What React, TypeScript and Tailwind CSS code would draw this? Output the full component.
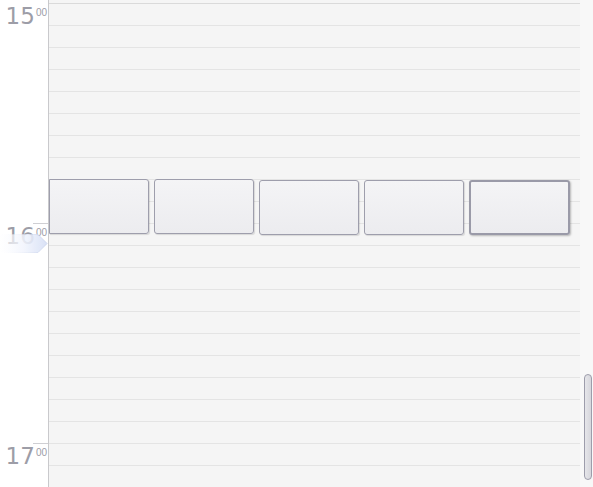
import React from 'react';

const hours = ['15', '16', '17'];
const rows = Array.from({ length: 22 });

const HourLabel: React.FC<{ hour: string; tick: boolean }> = ({ hour, tick }) => (
  <div className="h-[220px] shrink-0 flex flex-col">
    <div className={`h-px w-[15px] ml-auto ${tick ? 'bg-[#cfcfd3]' : 'bg-transparent'}`} />
    <div className="flex justify-end items-start pr-[1px] mt-[1px] text-[#9d9da7]">
      <span className="text-[23px] leading-[23px]">{hour}</span>
      <span className="text-[10px] leading-none mt-[3px] ml-[1px]" style={{ fontFamily: '"Liberation Sans", sans-serif' }}>00</span>
    </div>
  </div>
);

const Card: React.FC<{ selected?: boolean; className?: string }> = ({ selected, className }) => (
  <div
    className={`h-[55px] rounded-[3px] bg-gradient-to-b from-[#f4f4f6] to-[#ececef] ${
      selected
        ? 'w-[101px] border-2 border-[#9a9aa8] shadow-[1px_1px_2px_rgba(0,0,0,0.25)]'
        : 'w-[100px] border border-[#9e9eac] shadow-[1px_1px_1px_rgba(0,0,0,0.12)]'
    } ${className ?? ''}`}
  />
);

export default function App() {
  return (
    <div className="h-[487px] w-[593px] overflow-hidden flex bg-white" style={{ fontFamily: '"DejaVu Sans", sans-serif' }}>
      {/* time gutter */}
      <div className="relative w-[49px] shrink-0 border-r border-[#c9c9cc] pt-[3px] bg-white">
        {hours.map((h, i) => (
          <HourLabel key={h} hour={h} tick={i > 0} />
        ))}
        {/* current time marker */}
        <svg className="absolute left-0 top-[234px] opacity-90" width="48" height="20" viewBox="0 0 48 20">
          <defs>
            <linearGradient id="mk" x1="0" x2="1" y1="0" y2="0">
              <stop offset="0" stopColor="#ffffff" stopOpacity="0.6" />
              <stop offset="0.5" stopColor="#f2f5fd" stopOpacity="0.95" />
              <stop offset="1" stopColor="#d6dff6" />
            </linearGradient>
            <linearGradient id="mks" x1="0" x2="1" y1="0" y2="0">
              <stop offset="0" stopColor="#ffffff" stopOpacity="0" />
              <stop offset="1" stopColor="#c4cfec" />
            </linearGradient>
          </defs>
          <path d="M0 0.5 H38 L47 9.5 L38 18.5 H0 Z" fill="url(#mk)" stroke="url(#mks)" strokeWidth="1" />
        </svg>
      </div>

      {/* day grid */}
      <div className="relative w-[531px] shrink-0 bg-[#f5f5f5] pt-[3px]">
        {rows.map((_, i) => (
          <div key={i} className={`h-[22px] border-t ${i === 0 ? 'border-[#dadada]' : 'border-[#e4e4e4]'}`} />
        ))}
        <div className="absolute left-0 top-[179px] flex items-start gap-[5px]">
          <Card className="rounded-l-none" />
          <Card />
          <Card className="mt-px" />
          <Card className="mt-px" />
          <Card selected className="mt-px h-[54px]" />
        </div>
      </div>

      {/* scrollbar */}
      <div className="flex-1 bg-[#f8f8f8] flex flex-col pl-[4px] pr-[2px] pt-[374px]">
        <div className="h-[106px] w-[8px] rounded-full border border-[#9d9dab] bg-gradient-to-r from-[#e6e6ea] to-[#d6d6dc]" />
      </div>
    </div>
  );
}
